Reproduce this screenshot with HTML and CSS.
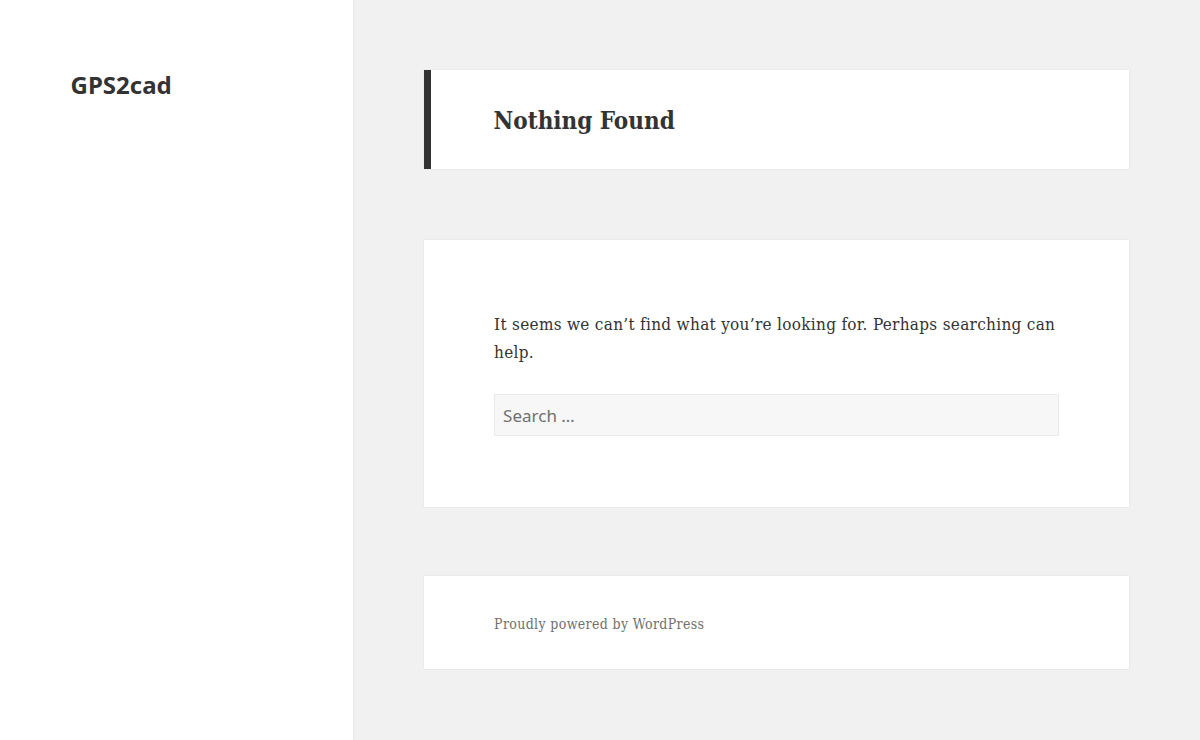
FILE: index.html
```html
<!DOCTYPE html>
<html lang="en">
<head>
    <meta charset="UTF-8">
    <meta name="viewport" content="width=device-width, initial-scale=1.0">
    <title>GPS2cad</title>
    <link rel="stylesheet" href="styles.css">
</head>
<body>
    <div class="site">
        <div class="sidebar">
            <header class="site-header">
                <p class="site-title"><a href="#">GPS2cad</a></p>
            </header>
        </div>

        <div class="site-content">
            <main class="site-main">
                <section class="no-results">
                    <header class="page-header">
                        <h1 class="page-title">Nothing Found</h1>
                    </header>

                    <div class="page-content">
                        <p>It seems we can&rsquo;t find what you&rsquo;re looking for. Perhaps searching can help.</p>
                        <form class="search-form" role="search">
                            <input type="search" class="search-field" placeholder="Search &hellip;" name="s">
                        </form>
                    </div>
                </section>
            </main>

            <footer class="site-footer">
                <a href="#">Proudly powered by WordPress</a>
            </footer>
        </div>
    </div>
</body>
</html>
```

FILE: styles.css
```css
html, body {
    margin: 0;
    padding: 0;
}

body {
    background-color: #f1f1f1;
    color: #333;
    font-family: "DejaVu Serif Condensed", "DejaVu Serif", serif;
    font-stretch: semi-condensed;
    font-size: 17px;
    line-height: 1.6471;
}

a {
    color: inherit;
    text-decoration: none;
}

.site {
    display: flex;
    min-height: 740px;
}

.sidebar {
    width: 29.4118%;
    background-color: #fff;
    box-shadow: 0 0 1px rgba(0, 0, 0, 0.15);
}

.site-header {
    margin: 69px 0;
    padding: 0 20%;
}

.site-title {
    margin: 0;
    font-family: "Noto Sans", sans-serif;
    font-stretch: normal;
    font-size: 24px;
    font-weight: 700;
    line-height: 32px;
}

.site-content {
    width: 58.8235%;
    padding-left: 5.8824%;
    padding-top: 70px;
}

.page-header {
    background-color: #fff;
    border-left: 7px solid #333;
    box-shadow: 0 0 1px rgba(0, 0, 0, 0.15);
    padding: 36px 63px 33px;
}

.page-title {
    margin: 0;
    font-size: 24px;
    font-weight: 700;
    line-height: 30px;
}

.page-content {
    background-color: #fff;
    box-shadow: 0 0 1px rgba(0, 0, 0, 0.15);
    margin-top: 71px;
    padding: 70px 10% 71px;
}

.page-content p {
    margin: 0 0 28px;
    letter-spacing: 0.3px;
}

.search-field {
    display: block;
    box-sizing: border-box;
    width: 100%;
    height: 42px;
    margin: 0;
    padding: 0 8px;
    background-color: #f7f7f7;
    border: 1px solid #eaeaea;
    border-radius: 0;
    color: #707070;
    font-family: "Noto Sans", sans-serif;
    font-stretch: normal;
    font-size: 17px;
    outline: none;
}

.search-field::placeholder {
    color: #707070;
}

.site-footer {
    background-color: #fff;
    box-shadow: 0 0 1px rgba(0, 0, 0, 0.15);
    margin-top: 69px;
    padding: 34px 10% 31px;
    color: #707070;
    font-size: 14px;
    line-height: 28px;
    letter-spacing: 0.35px;
}
```
